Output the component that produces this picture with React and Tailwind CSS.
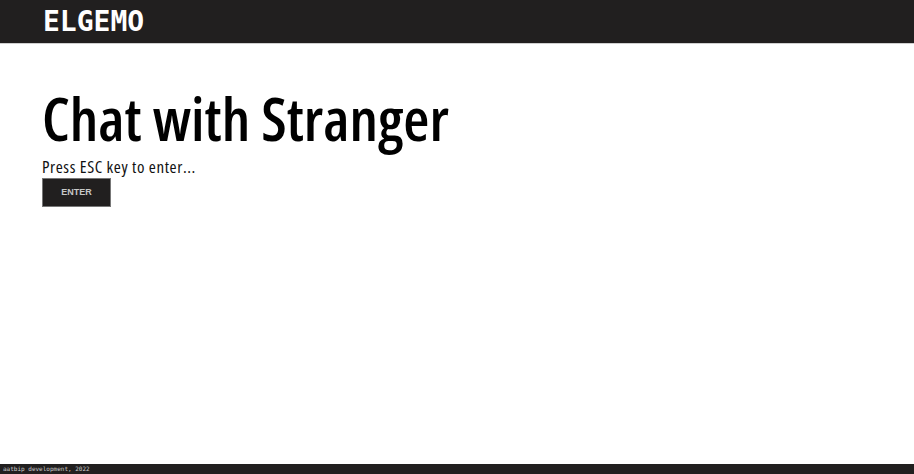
export default function App() {
  return (
    <div className="min-h-[474px] flex flex-col bg-white">
      <header className="h-[44px] bg-[#211f1f] border-b border-[#cfcfcf] flex items-center px-[43px]">
        <span className="text-[28px] font-bold text-white leading-none" style={{ fontFamily: '"DejaVu Sans Mono", monospace' }}>
          ELGEMO
        </span>
      </header>

      <main className="flex-1 px-[42px] pt-[35px]" style={{ fontFamily: '"Open Sans", sans-serif' }}>
        <h1 className="text-[60px] font-semibold font-stretch-condensed leading-[78px] text-black">Chat with Stranger</h1>
        <p className="text-[17px] font-stretch-condensed leading-[20px] text-[#111] tracking-[0.6px]">Press ESC key to enter...</p>
        <button className="w-[69px] h-[29px] bg-[#211f1f] border border-[#777] text-[9px] font-bold text-[#c8c8c8]" style={{ fontFamily: '"Liberation Sans", Arial, sans-serif' }}>
          ENTER
        </button>
      </main>

      <footer className="h-[10px] bg-[#211f1f] flex items-center px-[3px]">
        <span className="text-[6px] leading-none text-[#cccccc]" style={{ fontFamily: '"DejaVu Sans Mono", monospace' }}>aatbip development, 2022</span>
      </footer>
    </div>
  )
}
